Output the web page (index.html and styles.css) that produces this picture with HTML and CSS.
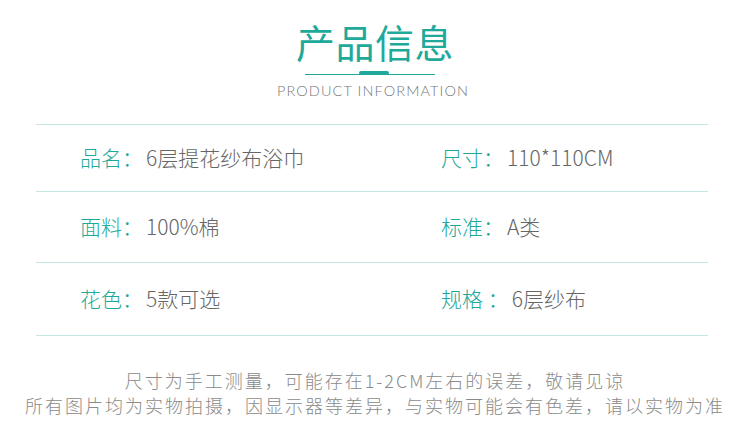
FILE: index.html
```html
<!DOCTYPE html>
<html lang="zh">
<head>
<meta charset="utf-8">
<link rel="stylesheet" href="styles.css">
</head>
<body>
<div class="page">
  <header class="head">
    <h1 class="title">产品信息</h1>
    <div class="rule"><span class="rule-bar"></span></div>
    <p class="subtitle">PRODUCT INFORMATION</p>
  </header>
  <div class="table">
    <div class="row row-1">
      <div class="cell"><span class="k">品名：</span><span class="v">6层提花纱布浴巾</span></div>
      <div class="cell"><span class="k">尺寸：</span><span class="v">110*110CM</span></div>
    </div>
    <div class="row row-2">
      <div class="cell"><span class="k">面料：</span><span class="v">100%棉</span></div>
      <div class="cell"><span class="k">标准：</span><span class="v">A类</span></div>
    </div>
    <div class="row row-3">
      <div class="cell"><span class="k">花色：</span><span class="v">5款可选</span></div>
      <div class="cell"><span class="k">规格 ：</span><span class="v">6层纱布</span></div>
    </div>
  </div>
  <div class="note">
    <p>尺寸为手工测量，可能存在1-2CM左右的误差，敬请见谅</p>
    <p>所有图片均为实物拍摄，因显示器等差异，与实物可能会有色差，请以实物为准</p>
  </div>
</div>
</body>
</html>
```
FILE: styles.css
```css
* { box-sizing: border-box; }
html, body { margin: 0; padding: 0; background: #fff; }
body {
  width: 750px;
  height: 441px;
  overflow: hidden;
  font-family: "Noto Sans CJK SC", "Noto Sans", sans-serif;
  font-weight: 300;
}
.page { width: 750px; }
.head {
  display: flex;
  flex-direction: column;
  align-items: center;
  padding-top: 16px;
}
.title {
  margin: 0;
  font-size: 39px;
  line-height: 50px;
  font-weight: 400;
  color: #1ea99b;
  letter-spacing: 0.5px;
}
.rule {
  position: relative;
  width: 130px;
  height: 1px;
  margin-top: 8px;
  margin-right: 11px;
  background: #1ea99b;
}
.rule-bar {
  position: absolute;
  left: 54px;
  top: -3px;
  width: 30px;
  height: 4px;
  border-radius: 2px;
  background: #1ea99b;
}
.subtitle {
  margin: 7px 4px 0 0;
  font-family: "Lato", "Open Sans", sans-serif;
  font-weight: 300;
  font-size: 14.5px;
  line-height: 18px;
  letter-spacing: 1.1px;
  color: #777;
}
.table {
  margin: 24px 0 0 36px;
  width: 672px;
  border-top: 1px solid #c4e6e3;
}
.row {
  display: grid;
  grid-template-columns: 405px 1fr;
  align-items: center;
  border-bottom: 1px solid #c4e6e3;
}
.row-1 { height: 67px; }
.row-2 { height: 71px; }
.row-3 { height: 73px; }
.cell {
  font-size: 21px;
  line-height: 28px;
  white-space: nowrap;
  padding-bottom: 2px;
}
.cell:first-child { padding-left: 44px; }
.k { color: #1ea99b; }
.v { color: #666; margin-left: 3px; }
.note {
  margin-top: 32px;
  text-align: center;
  color: #8a8a8a;
  font-size: 18px;
  line-height: 25px;
  letter-spacing: 2px;
}
.note p { margin: 0; white-space: nowrap; }
```
